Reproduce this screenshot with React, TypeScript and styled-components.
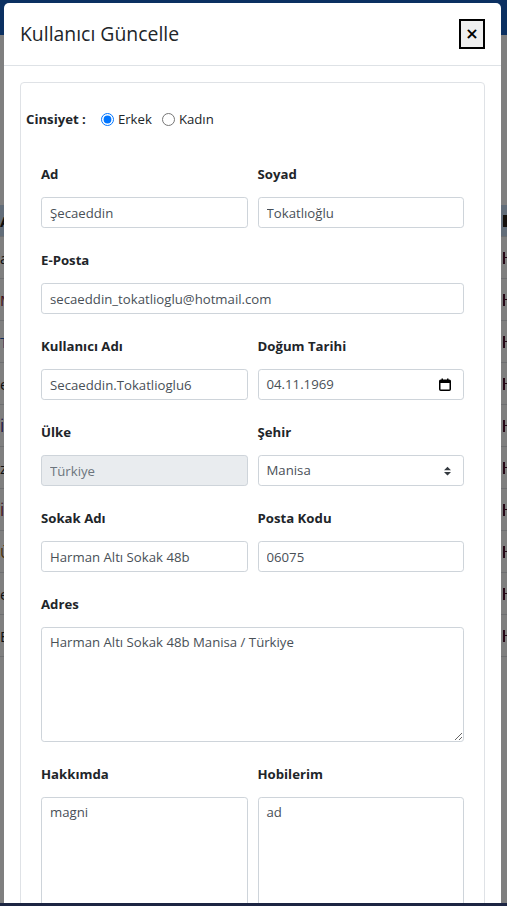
import React from "react";
import styled, { createGlobalStyle } from "styled-components";

const GlobalStyle = createGlobalStyle`
  *, *::before, *::after { box-sizing: border-box; }
  html, body { margin: 0; padding: 0; }
  body {
    width: 507px;
    height: 906px;
    overflow: hidden;
    font-family: "Segoe UI", "Open Sans", "Noto Sans", sans-serif;
    font-size: 13.2px;
    color: #212529;
    background: #fff;
  }
`;

/* ---------- page behind the modal ---------- */
const Page = styled.div`
  height: 906px;
  display: flex;
  flex-direction: column;
  background: #fff;
`;

const Navbar = styled.header`
  height: 35px;
  flex-shrink: 0;
  background: #1760c2;
`;

const Table = styled.div`
  margin-top: 170px;
  display: flex;
  flex-direction: column;
`;

const TableRow = styled.div<{ $head?: boolean }>`
  display: grid;
  grid-template-columns: 502px 1fr;
  align-items: center;
  height: ${(p) => (p.$head ? 32 : 42)}px;
  background: ${(p) => (p.$head ? "#c4dbf3" : "#fff")};
  border-bottom: 1px solid #dcdfe3;
  font-family: "Open Sans", sans-serif;
  font-size: 15px;
  font-weight: ${(p) => (p.$head ? 700 : 400)};
`;

const Cell = styled.span<{ $color: string }>`
  color: ${(p) => p.$color};
  white-space: nowrap;
  overflow: hidden;
`;

const Mark = styled.span<{ $head?: boolean }>`
  position: relative;
  display: block;
  margin-left: 1px;
  width: ${(p) => (p.$head ? 4 : 2)}px;
  height: 12px;
  background: ${(p) => (p.$head ? "#2a2118" : "#4a0f2a")};
  &::after {
    content: "";
    position: absolute;
    left: 2px;
    top: 5px;
    width: ${(p) => (p.$head ? 0 : 4)}px;
    height: 1.5px;
    background: #4a0f2a;
  }
`;

const Backdrop = styled.div`
  position: fixed;
  inset: 0;
  background: rgba(0, 0, 0, 0.5);
`;

const BottomBar = styled.div`
  position: fixed;
  left: 0;
  right: 0;
  bottom: 0;
  height: 3px;
  background: #1c2542;
  z-index: 20;
`;

/* ---------- modal ---------- */
const Dialog = styled.div`
  position: fixed;
  top: 3px;
  left: 4px;
  width: 497px;
  background: #fff;
  border-radius: 5px 5px 0 0;
  z-index: 10;
`;

const Header = styled.div`
  display: flex;
  align-items: flex-start;
  justify-content: space-between;
  padding: 16px;
  border-bottom: 1px solid #dee2e6;
`;

const Title = styled.h5`
  margin: 0;
  font-size: 19.4px;
  line-height: 30px;
  font-weight: 400;
  color: #212529;
`;

const CloseButton = styled.button`
  width: 26px;
  height: 30px;
  padding: 0;
  border: 2px solid #000;
  background: #efefef;
  color: #000;
  font-family: "DejaVu Sans", sans-serif;
  font-size: 16px;
  font-weight: 700;
  line-height: 1;
  display: flex;
  align-items: center;
  justify-content: center;
`;

const Body = styled.div`
  padding: 16px;
`;

const Card = styled.div`
  border: 1px solid #dfe2e6;
  border-radius: 4px;
  padding: 24px 5px 0;
`;

const GenderRow = styled.div`
  display: flex;
  align-items: center;
  height: 24px;
  font-size: 13.2px;
`;

const GenderLabel = styled.span`
  font-weight: 700;
  margin-right: 15px;
`;

const RadioOption = styled.label`
  display: inline-flex;
  align-items: center;
  gap: 4px;
  margin-right: 10px;
`;

const Radio = styled.input`
  margin: 0;
  width: 13px;
  height: 13px;
`;

const Form = styled.div`
  display: grid;
  grid-template-columns: 1fr 1fr;
  column-gap: 10px;
  row-gap: 22px;
  padding: 33px 15px 0;
`;

const Field = styled.div<{ $full?: boolean }>`
  grid-column: ${(p) => (p.$full ? "1 / -1" : "auto")};
  display: flex;
  flex-direction: column;
  min-width: 0;
`;

const Label = styled.label`
  font-size: 13.2px;
  line-height: 21px;
  font-weight: 700;
  margin-bottom: 12px;
  color: #212529;
`;

const controlBase = `
  width: 100%;
  font-family: inherit;
  font-size: 13.2px;
  line-height: 21px;
  color: #495057;
  background: #fff;
  border: 1px solid #ced4da;
  border-radius: 3.2px;
`;

const Input = styled.input`
  ${controlBase}
  height: 31px;
  padding: 4px 8px;
  &:disabled {
    background: #e9ecef;
    color: #6c757d;
  }
`;

const BoxControl = styled.div`
  ${controlBase}
  height: 31px;
  padding: 4px 12px 4px 8px;
  display: flex;
  align-items: center;
  justify-content: space-between;
`;

const TextArea = styled.textarea<{ $h: number }>`
  ${controlBase}
  height: ${(p) => p.$h}px;
  padding: 4px 8px;
  resize: vertical;
  display: block;
`;

const CalendarIcon = () => (
  <svg width="12" height="13" viewBox="0 0 12 13">
    <rect x="0.75" y="2.25" width="10.5" height="10" rx="1" fill="none" stroke="#000" strokeWidth="1.5" />
    <rect x="0.75" y="2.25" width="10.5" height="2.75" fill="#000" />
    <rect x="2.5" y="0.5" width="1.5" height="2" fill="#000" />
    <rect x="8" y="0.5" width="1.5" height="2" fill="#000" />
  </svg>
);

const SelectArrows = () => (
  <svg width="7" height="10" viewBox="0 0 4 5">
    <path d="M2 0L0 2h4zm0 5L0 3h4z" fill="#343a40" />
  </svg>
);

const rows: { left: string; lc: string }[] = [
  { left: "ali", lc: "#212529" },
  { left: "Mert", lc: "#7a1530" },
  { left: "Tuna", lc: "#1c5bb5" },
  { left: "emre", lc: "#212529" },
  { left: "İlker", lc: "#3a1e7a" },
  { left: "zeki", lc: "#212529" },
  { left: "İpek", lc: "#7a1530" },
  { left: "Ümit", lc: "#8a5a10" },
  { left: "erdem", lc: "#212529" },
  { left: "Emin", lc: "#212529" },
];

export default function App() {
  return (
    <>
      <GlobalStyle />
      <Page>
        <Navbar />
        <Table>
          <TableRow $head>
            <Cell $color="#1b1b1b">Ad</Cell>
            <Mark $head />
          </TableRow>
          {rows.map((r, i) => (
            <TableRow key={i}>
              <Cell $color={r.lc}>{r.left}</Cell>
              <Mark />
            </TableRow>
          ))}
        </Table>
      </Page>
      <Backdrop />
      <Dialog>
        <Header>
          <Title>Kullanıcı Güncelle</Title>
          <CloseButton type="button" aria-label="Kapat">×</CloseButton>
        </Header>
        <Body>
          <Card>
            <GenderRow>
              <GenderLabel>Cinsiyet :</GenderLabel>
              <RadioOption>
                <Radio type="radio" name="gender" defaultChecked />
                Erkek
              </RadioOption>
              <RadioOption>
                <Radio type="radio" name="gender" />
                Kadın
              </RadioOption>
            </GenderRow>
            <Form>
              <Field>
                <Label>Ad</Label>
                <Input defaultValue="Şecaeddin" />
              </Field>
              <Field>
                <Label>Soyad</Label>
                <Input defaultValue="Tokatlıoğlu" />
              </Field>
              <Field $full>
                <Label>E-Posta</Label>
                <Input defaultValue="secaeddin_tokatlioglu@hotmail.com" />
              </Field>
              <Field>
                <Label>Kullanıcı Adı</Label>
                <Input defaultValue="Secaeddin.Tokatlioglu6" />
              </Field>
              <Field>
                <Label>Doğum Tarihi</Label>
                <BoxControl>
                  <span>04.11.1969</span>
                  <CalendarIcon />
                </BoxControl>
              </Field>
              <Field>
                <Label>Ülke</Label>
                <Input defaultValue="Türkiye" disabled />
              </Field>
              <Field>
                <Label>Şehir</Label>
                <BoxControl>
                  <span>Manisa</span>
                  <SelectArrows />
                </BoxControl>
              </Field>
              <Field>
                <Label>Sokak Adı</Label>
                <Input defaultValue="Harman Altı Sokak 48b" />
              </Field>
              <Field>
                <Label>Posta Kodu</Label>
                <Input defaultValue="06075" />
              </Field>
              <Field $full>
                <Label>Adres</Label>
                <TextArea $h={115} defaultValue="Harman Altı Sokak 48b Manisa / Türkiye" />
              </Field>
              <Field>
                <Label>Hakkımda</Label>
                <TextArea $h={115} defaultValue="magni" />
              </Field>
              <Field>
                <Label>Hobilerim</Label>
                <TextArea $h={115} defaultValue="ad" />
              </Field>
            </Form>
          </Card>
        </Body>
      </Dialog>
      <BottomBar />
    </>
  );
}
